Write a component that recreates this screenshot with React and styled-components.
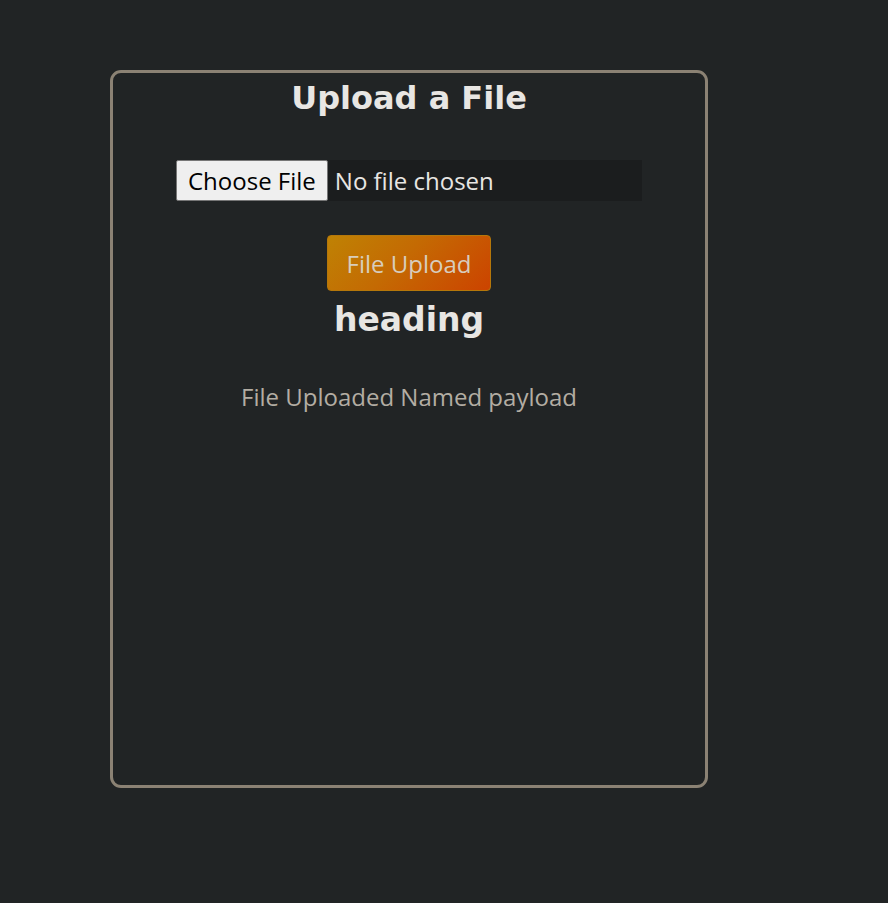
import React from "react";
import styled, { createGlobalStyle } from "styled-components";

const Global = createGlobalStyle`
  html, body { background: #212425; }
  body { margin: 0; font-family: "Open Sans", "Noto Sans", sans-serif; color: #e8e6e3; }
`;

const Page = styled.div`
  padding: 70px 0 0 110px;
`;

const Card = styled.div`
  box-sizing: border-box;
  width: 598px;
  height: 718px;
  border: 3px solid #8b8274;
  border-radius: 11px;
  display: flex;
  flex-direction: column;
  align-items: center;
`;

const Title = styled.h1`
  margin: 0;
  font-family: "DejaVu Sans", sans-serif;
  font-weight: 700;
  font-size: 32px;
  line-height: 50px;
  color: #e8e6e3;
`;

const FileInput = styled.input`
  box-sizing: border-box;
  margin-top: 37px;
  width: 466px;
  height: 41px;
  background: #1b1d1e;
  color: #e8e6e3;
  font-family: "Open Sans", sans-serif;
  font-size: 24px;
  padding: 0;
  &::file-selector-button {
    height: 41px;
    margin: 0 7px 0 0;
    padding: 0 11px;
    background: #efefef;
    color: #000;
    border: 1px solid #767676;
    border-radius: 2px;
    font-family: "Open Sans", sans-serif;
    font-size: 24px;
  }
`;

const UploadButton = styled.button`
  box-sizing: border-box;
  margin-top: 34px;
  width: 164px;
  height: 56px;
  border: 1px solid #b5770a;
  border-radius: 4px;
  background: linear-gradient(135deg, #bf8204 0%, #c46a03 45%, #cc4300 100%);
  color: #d8cdbd;
  font-family: "Open Sans", sans-serif;
  font-size: 24px;
  padding: 0;
`;

const Heading = styled(Title).attrs({ as: "h2" })`
  margin-top: 6px;
  font-size: 33px;
  line-height: 46px;
`;

const Message = styled.p`
  margin: 37px 0 0;
  font-size: 24px;
  line-height: 33px;
  color: #b3ada3;
`;

export default function App() {
  return (
    <Page>
      <Global />
      <Card>
        <Title>Upload a File</Title>
        <FileInput type="file" />
        <UploadButton>File Upload</UploadButton>
        <Heading>heading</Heading>
        <Message>File Uploaded Named payload</Message>
      </Card>
    </Page>
  );
}
